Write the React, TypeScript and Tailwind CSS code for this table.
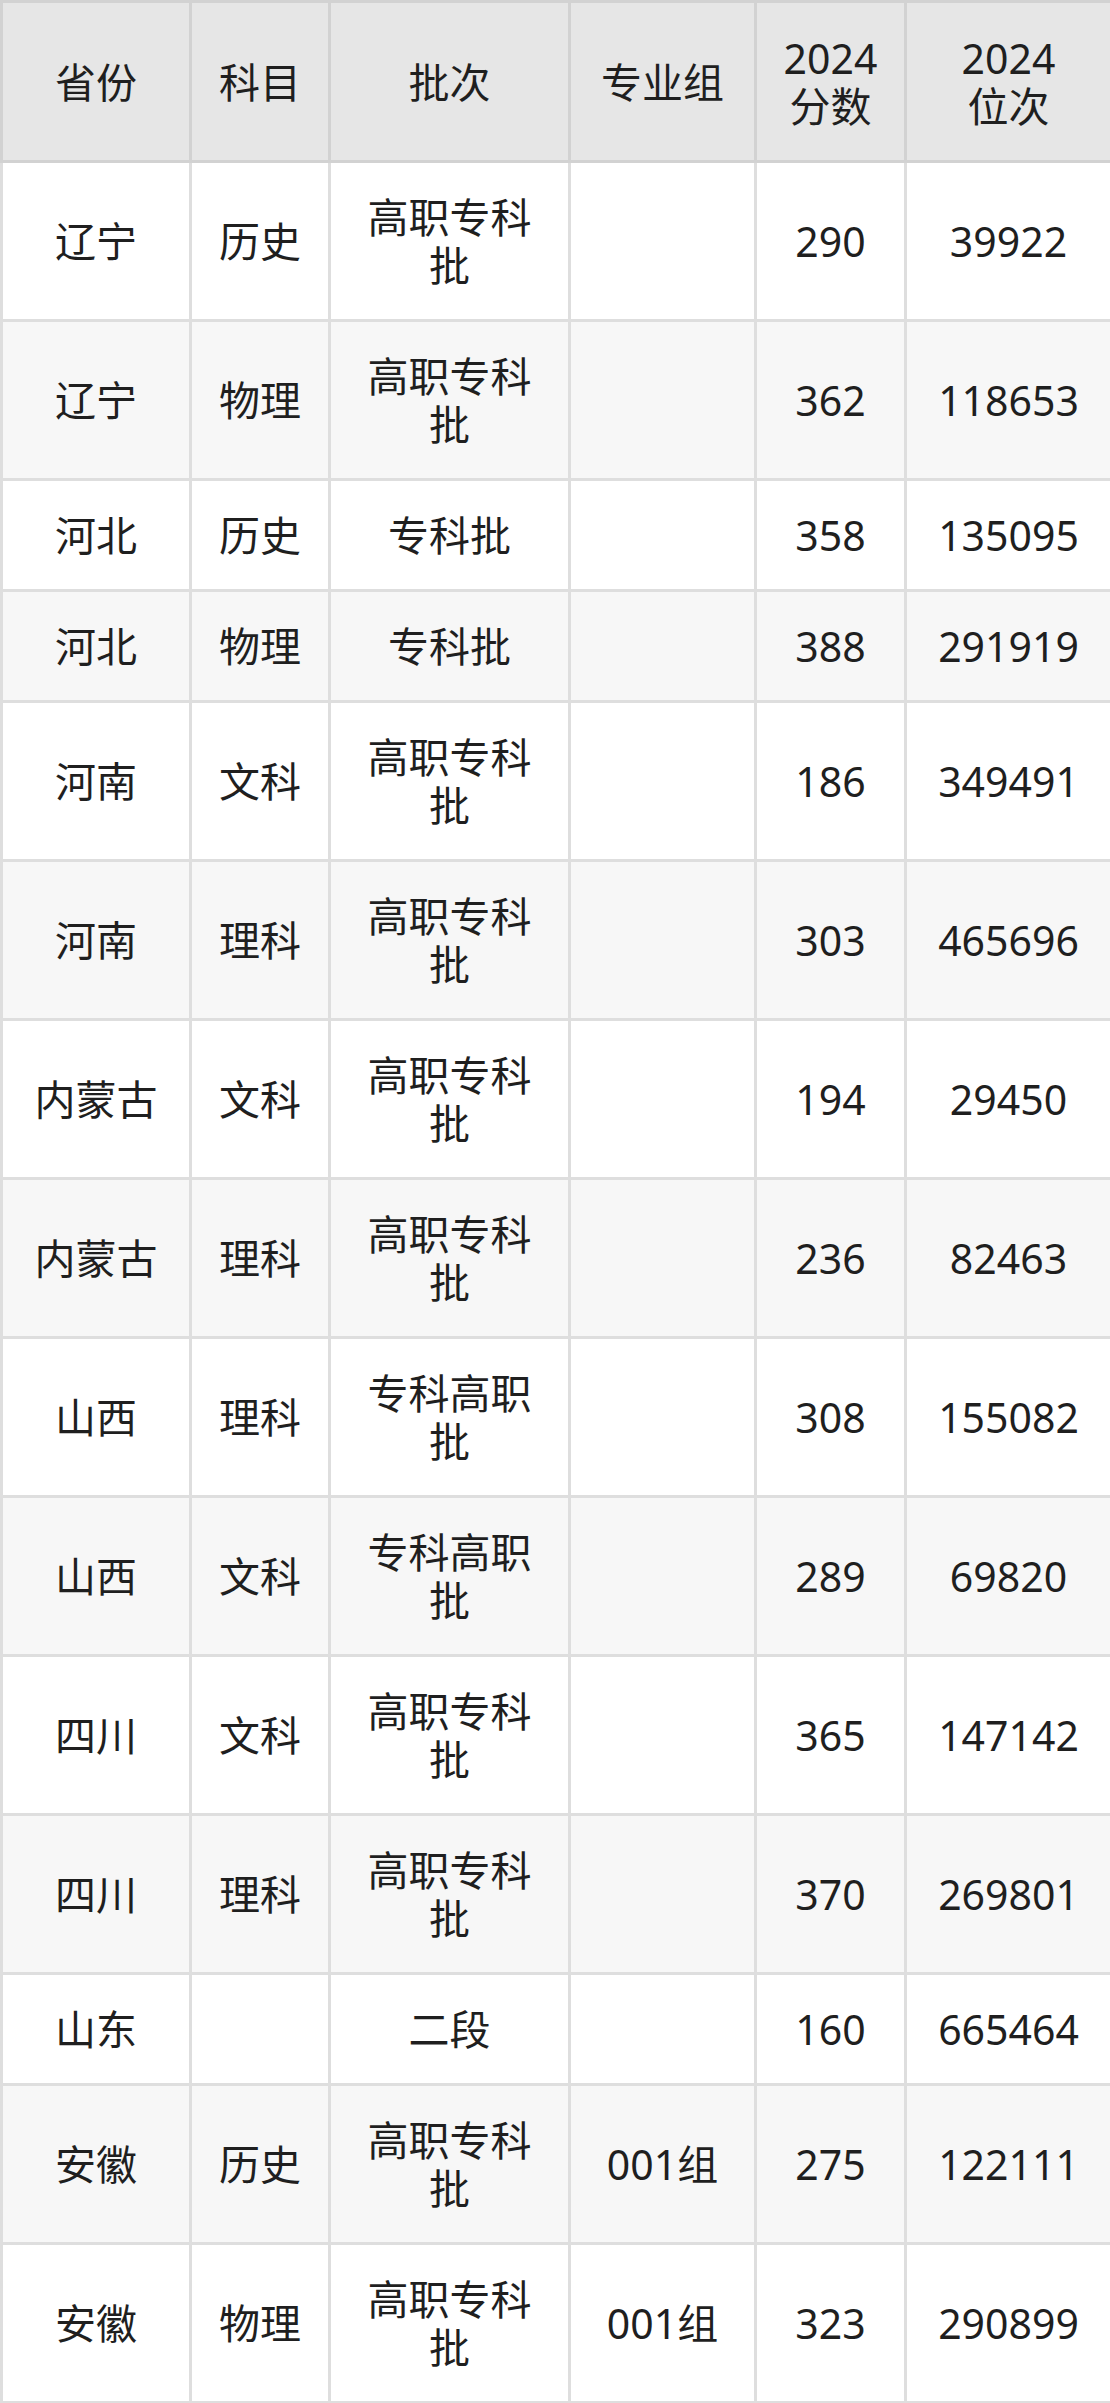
import React from "react";

type Row = [string, string, string, string, string, string];

const rows: Row[] = [
  ["辽宁", "历史", "高职专科\n批", "", "290", "39922"],
  ["辽宁", "物理", "高职专科\n批", "", "362", "118653"],
  ["河北", "历史", "专科批", "", "358", "135095"],
  ["河北", "物理", "专科批", "", "388", "291919"],
  ["河南", "文科", "高职专科\n批", "", "186", "349491"],
  ["河南", "理科", "高职专科\n批", "", "303", "465696"],
  ["内蒙古", "文科", "高职专科\n批", "", "194", "29450"],
  ["内蒙古", "理科", "高职专科\n批", "", "236", "82463"],
  ["山西", "理科", "专科高职\n批", "", "308", "155082"],
  ["山西", "文科", "专科高职\n批", "", "289", "69820"],
  ["四川", "文科", "高职专科\n批", "", "365", "147142"],
  ["四川", "理科", "高职专科\n批", "", "370", "269801"],
  ["山东", "", "二段", "", "160", "665464"],
  ["安徽", "历史", "高职专科\n批", "001组", "275", "122111"],
  ["安徽", "物理", "高职专科\n批", "001组", "323", "290899"],
];

const headers = ["省份", "科目", "批次", "专业组", "2024\n分数", "2024\n位次"];
const widths = ["w-[189px]", "w-[139px]", "w-[240px]", "w-[186px]", "w-[150px]", "w-[206px]"];

export default function App() {
  return (
    <div className="w-[1110px] bg-white">
      <table
        className="w-[1110px] table-fixed border-collapse text-center text-[#1f1f1f] text-[41px] leading-[48px]"
        style={{ fontFamily: '"Noto Sans", "Noto Sans CJK SC", sans-serif' }}
      >
        <colgroup>
          {widths.map((w, i) => (
            <col key={i} className={w} />
          ))}
        </colgroup>
        <thead>
          <tr className="h-[160px] bg-[#e6e6e6]">
            {headers.map((h, i) => (
              <th
                key={i}
                className="border-[3px] border-[#d2d2d2] font-normal whitespace-pre-line align-middle p-0"
              >
                {h}
              </th>
            ))}
          </tr>
        </thead>
        <tbody>
          {rows.map((r, ri) => {
            const tall = r[2].includes("\n");
            return (
              <tr
                key={ri}
                className={`${tall ? "h-[159px]" : "h-[111px]"} ${ri % 2 === 1 ? "bg-[#f7f7f7]" : "bg-white"}`}
              >
                {r.map((c, ci) => (
                  <td
                    key={ci}
                    className="border-[3px] border-[#dedede] whitespace-pre-line align-middle p-0"
                  >
                    {c}
                  </td>
                ))}
              </tr>
            );
          })}
        </tbody>
      </table>
    </div>
  );
}
